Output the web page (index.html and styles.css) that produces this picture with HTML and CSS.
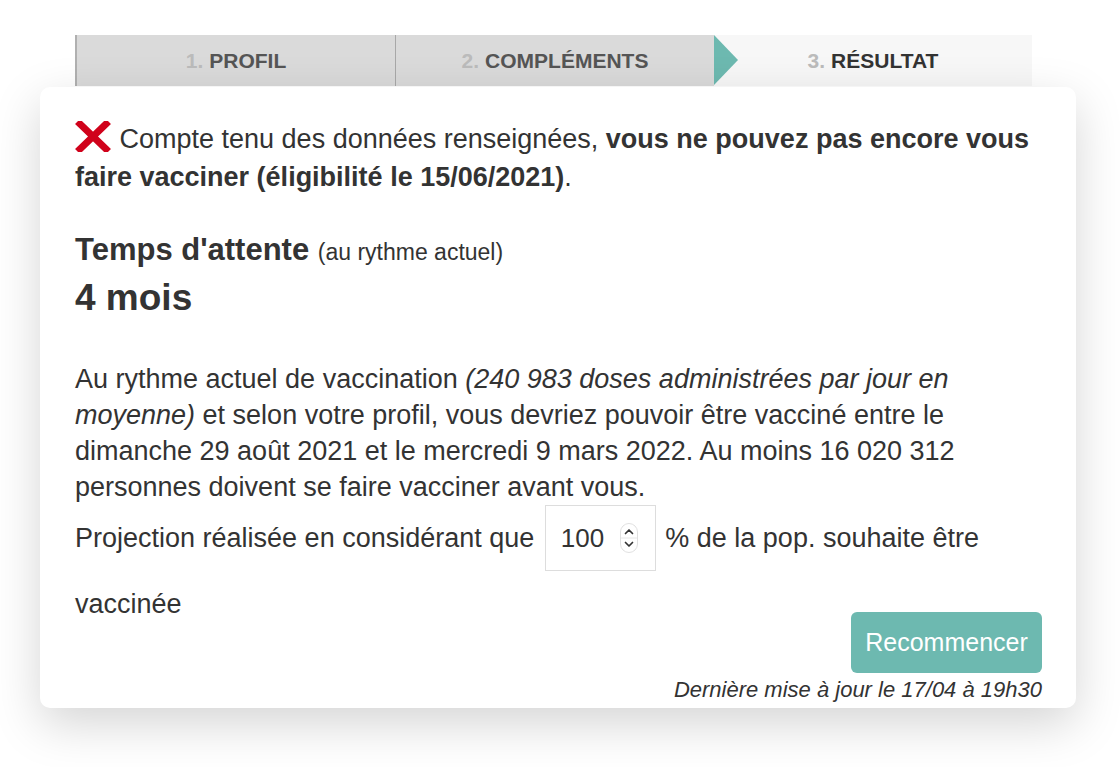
FILE: index.html
```html
<!DOCTYPE html>
<html lang="fr">
<head>
    <meta charset="UTF-8">
    <meta name="viewport" content="width=device-width, initial-scale=1.0">
    <title>Résultat</title>
    <link rel="stylesheet" href="styles.css">
</head>
<body>
    <div class="page">
        <div class="steps">
            <div class="step step-done"><span class="num">1.</span> PROFIL</div>
            <div class="step step-done step-last"><span class="num">2.</span> COMPLÉMENTS</div>
            <div class="step step-current"><span class="num">3.</span> RÉSULTAT</div>
        </div>

        <div class="card">
            <p class="verdict">
                <svg class="cross" width="36" height="31" viewBox="0 0 36 31">
                    <path d="M5 3 L31 28 M31 3 L5 28" stroke="#d0021b" stroke-width="7" stroke-linecap="square"/>
                </svg>
                Compte tenu des données renseignées, <b>vous ne pouvez pas encore vous faire vacciner (éligibilité le 15/06/2021)</b>.
            </p>

            <h2 class="wait-title">Temps d'attente <small>(au rythme actuel)</small></h2>
            <div class="wait-value">4 mois</div>

            <p class="details details-first">
                Au rythme actuel de vaccination <i>(240 983 doses administrées par jour en moyenne)</i> et selon votre profil, vous devriez pouvoir être vacciné entre le dimanche 29 août 2021 et le mercredi 9 mars 2022. Au moins 16 020 312 personnes doivent se faire vacciner avant vous.
            </p>
            <p class="details">
                Projection réalisée en considérant que
                <span class="percent">
                    <input type="number" value="100" id="percentInput">
                    <svg class="spin" width="18" height="30" viewBox="0 0 18 30">
                        <rect x="0.5" y="0.5" width="17" height="29" rx="8.5" fill="#fff" stroke="#e0e0e0"/>
                        <line x1="1" y1="15" x2="17" y2="15" stroke="#e6e6e6"/>
                        <path d="M5.5 10.5 L9 7 L12.5 10.5" fill="none" stroke="#333" stroke-width="1.7" stroke-linecap="round" stroke-linejoin="round"/>
                        <path d="M5.5 19.5 L9 23 L12.5 19.5" fill="none" stroke="#333" stroke-width="1.7" stroke-linecap="round" stroke-linejoin="round"/>
                    </svg>
                </span>
                % de la pop. souhaite être vaccinée
            </p>

            <div class="footer">
                <button class="btn-restart">Recommencer</button>
                <div class="updated">Dernière mise à jour le 17/04 à 19h30</div>
            </div>
        </div>
    </div>
</body>
</html>
```

FILE: styles.css
```css
body {
    font-family: "Liberation Sans", Arial, sans-serif;
    background-color: #fff;
    color: #333;
    margin: 0;
    padding: 0;
}
.page {
    width: 1036px;
    padding: 35px 0 59px 40px;
}
.steps {
    display: flex;
    margin: 0 44px 0 35px;
    height: 51px;
}
.step {
    flex: 1;
    display: flex;
    align-items: center;
    justify-content: center;
    font-size: 21px;
    font-weight: bold;
    color: #555;
    position: relative;
}
.step .num {
    color: #bbb;
    margin-right: 6px;
}
.step-done {
    background-color: #dadada;
    border-left: 1px solid #a8a8a8;
}
.step-done:first-child {
    border-left: 2px solid #b0b0b0;
}
.step-last::after {
    content: "";
    position: absolute;
    right: -24px;
    top: 0;
    border-top: 25.5px solid transparent;
    border-bottom: 25.5px solid transparent;
    border-left: 24px solid #6db9b0;
    z-index: 1;
}
.step-current {
    background-color: #f7f7f7;
    color: #333;
}
.card {
    background: white;
    border-radius: 10px;
    box-shadow: 0 16px 48px rgba(0, 0, 0, 0.17);
    padding: 33px 34px 6px 35px;
    position: relative;
    z-index: 2;
    margin-top: 1px;
}
p {
    margin: 0;
}
.verdict {
    font-size: 27px;
    line-height: 38px;
}
.cross {
    vertical-align: -4px;
    margin-right: 1px;
}
.wait-title {
    font-size: 31px;
    line-height: 36px;
    margin: 36px 0 0;
}
.wait-title small {
    font-size: 23px;
    font-weight: normal;
}
.wait-value {
    font-size: 37px;
    font-weight: bold;
    line-height: 40px;
    margin-top: 8px;
}
.details {
    font-size: 27px;
    line-height: 36px;
}
.details-first {
    margin-top: 43px;
}
.percent {
    display: inline-flex;
    align-items: center;
    width: 109px;
    height: 64px;
    border: 1px solid #ddd;
    margin: 0 2px 15px 3px;
}
.percent input {
    width: 59px;
    border: none;
    outline: none;
    font-family: inherit;
    font-size: 26px;
    color: #333;
    padding: 0 0 0 15px;
    background: transparent;
    -moz-appearance: textfield;
}
.percent input::-webkit-inner-spin-button,
.percent input::-webkit-outer-spin-button {
    -webkit-appearance: none;
    margin: 0;
}
.footer {
    display: flex;
    flex-direction: column;
    align-items: flex-end;
    margin-top: -10px;
}
.btn-restart {
    background-color: #6db9b0;
    color: white;
    border: none;
    border-radius: 6px;
    width: 191px;
    height: 61px;
    font-family: inherit;
    font-size: 25px;
    cursor: pointer;
}
.updated {
    font-size: 22px;
    font-style: italic;
    line-height: 24px;
    margin-top: 5px;
}
```
